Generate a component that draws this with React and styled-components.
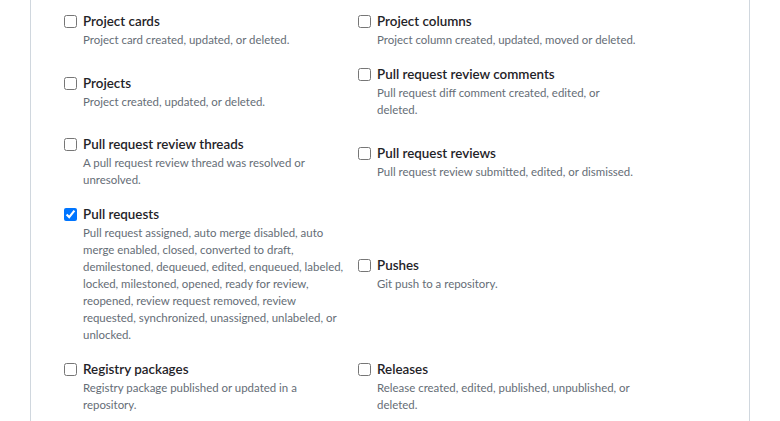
import React from "react";
import styled, { createGlobalStyle } from "styled-components";

const GlobalStyle = createGlobalStyle`
  html, body {
    margin: 0;
    padding: 0;
    background: #ffffff;
  }
  body {
    font-family: Lato, "Liberation Sans", sans-serif;
    color: #1f2328;
  }
`;

const Panel = styled.div`
  margin-left: 30px;
  width: 718px;
  height: 421px;
  overflow: hidden;
  border-left: 1px solid #d0d7de;
  border-right: 1px solid #d0d7de;
  background: #fff;
`;

const EventList = styled.ul`
  list-style: none;
  margin: 0;
  padding: 11px 0 0 33px;
  display: grid;
  grid-template-columns: 294px 294px;
  row-gap: 16px;
  align-items: center;
`;

const EventChoice = styled.li`
  display: flex;
  align-items: flex-start;
  gap: 6px;
`;

const Check = styled.input.attrs({ type: "checkbox" })`
  flex: none;
  width: 13px;
  height: 13px;
  margin: 4px 0 0 0;
  accent-color: #0075ff;
`;

const Text = styled.div`
  display: flex;
  flex-direction: column;
  max-width: 262px;
`;

const Title = styled.span`
  font-size: 13.4px;
  line-height: 20px;
  font-weight: 600;
  color: #1f2328;
`;

const Description = styled.span`
  font-size: 11.45px;
  line-height: 17px;
  color: #656d76;
`;

const events = [
  ["Project cards", "Project card created, updated, or deleted."],
  ["Project columns", "Project column created, updated, moved or deleted."],
  ["Projects", "Project created, updated, or deleted."],
  ["Pull request review comments", "Pull request diff comment created, edited, or deleted."],
  ["Pull request review threads", "A pull request review thread was resolved or unresolved."],
  ["Pull request reviews", "Pull request review submitted, edited, or dismissed."],
  [
    "Pull requests",
    "Pull request assigned, auto merge disabled, auto merge enabled, closed, converted to draft, demilestoned, dequeued, edited, enqueued, labeled, locked, milestoned, opened, ready for review, reopened, review request removed, review requested, synchronized, unassigned, unlabeled, or unlocked.",
    true,
  ],
  ["Pushes", "Git push to a repository."],
  ["Registry packages", "Registry package published or updated in a repository."],
  ["Releases", "Release created, edited, published, unpublished, or deleted."],
];

export default function App() {
  return (
    <>
      <GlobalStyle />
      <Panel>
        <EventList>
          {events.map(([title, desc, checked]) => (
            <EventChoice key={title}>
              <Check defaultChecked={!!checked} />
              <Text>
                <Title>{title}</Title>
                <Description>{desc}</Description>
              </Text>
            </EventChoice>
          ))}
        </EventList>
      </Panel>
    </>
  );
}
